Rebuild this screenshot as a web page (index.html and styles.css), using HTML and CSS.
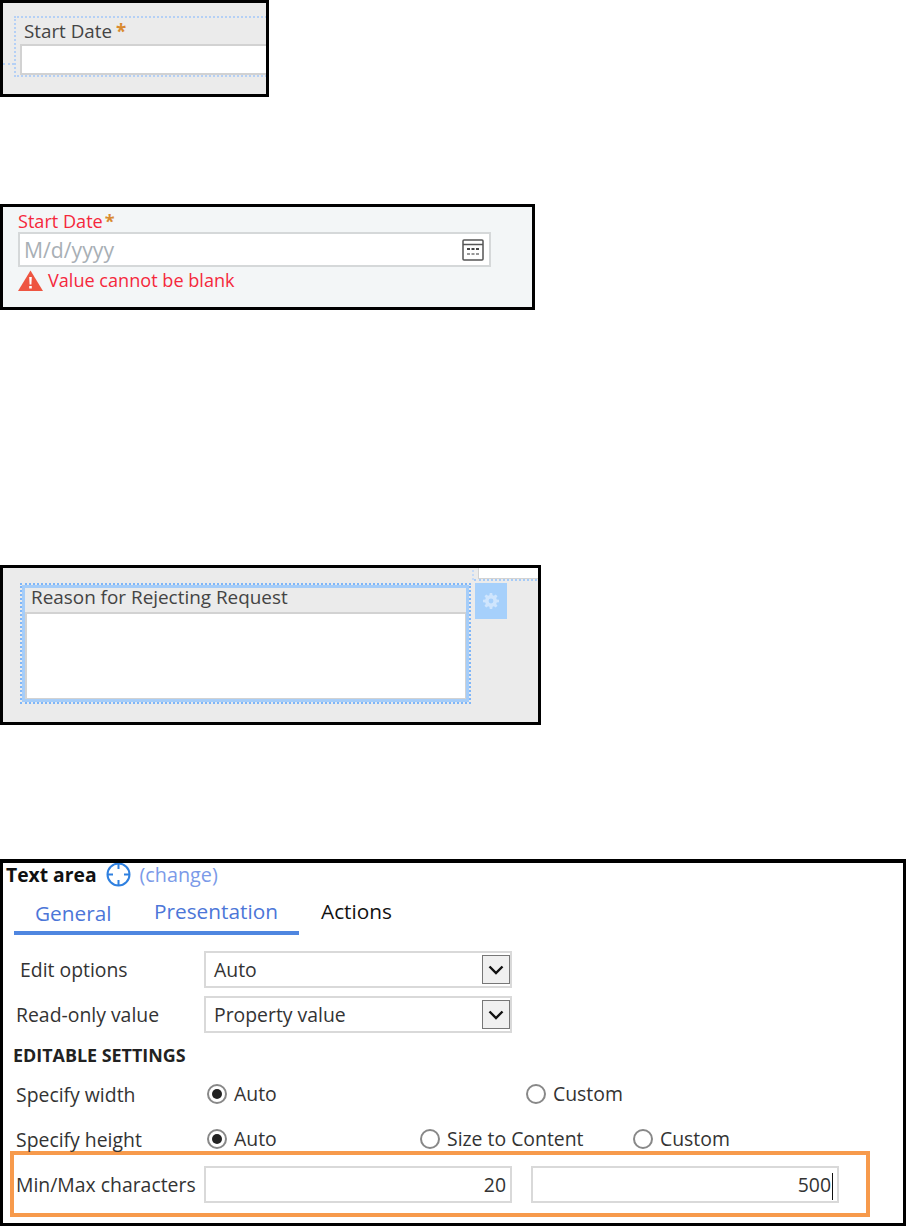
FILE: index.html
```html
<!DOCTYPE html>
<html lang="en">
<head>
    <meta charset="UTF-8">
    <title>Text area validation</title>
    <link rel="stylesheet" href="styles.css">
</head>
<body>
    <!-- Required field in the designer -->
    <div class="shot shot-designer">
        <div class="guide-stub"></div>
        <div class="cell-outline">
            <div class="field-label">Start Date<span class="star">*</span></div>
            <div class="plain-input"></div>
        </div>
    </div>

    <!-- Required field at run time -->
    <div class="shot shot-error">
        <div class="field-label error-text">Start Date<span class="star">*</span></div>
        <div class="date-input">
            <span class="placeholder">M/d/yyyy</span>
            <svg class="calendar" width="22" height="22" viewBox="0 0 22 22">
                <rect x="1" y="1" width="20" height="20" rx="1" fill="#fff" stroke="#555" stroke-width="1.5"/>
                <path d="M1 5.5h20" stroke="#555" stroke-width="1.5"/>
                <path d="M5 10h3M9.5 10h3M14 10h3" stroke="#444" stroke-width="2"/>
                <path d="M5 15h3M9.5 15h3M14 15h3" stroke="#777" stroke-width="1.5"/>
            </svg>
        </div>
        <div class="error-row">
            <svg width="25" height="21" viewBox="0 0 25 21">
                <path d="M12.5 0.5L25 21H0Z" fill="#ee5541"/>
                <path d="M11.2 7h2.6l-.4 7.5h-1.8zM11.2 16h2.6v2.6h-2.6z" fill="#fff"/>
            </svg>
            <span class="error-text">Value cannot be blank</span>
        </div>
    </div>

    <!-- Selected text area cell -->
    <div class="shot shot-selected">
        <div class="top-guides">
            <div class="guide-left"></div>
            <div class="guide-right"><div class="white-tab"></div></div>
        </div>
        <div class="selected-row">
            <div class="selected-cell">
                <div class="field-label">Reason for Rejecting Request</div>
                <div class="plain-area"></div>
            </div>
            <div class="gear-tile">
                <svg width="16" height="16" viewBox="0 0 16 16">
                    <path d="M6.800 0h2.400l.4 2.300 1.300.5 1.900-1.300 1.700 1.700-1.300 1.900.5 1.300 2.300.4v2.400l-2.300.4-.5 1.300 1.300 1.900-1.700 1.700-1.900-1.300-1.300.5-.4 2.300H6.800l-.4-2.300-1.300-.5-1.900 1.300-1.700-1.700 1.300-1.900-.5-1.300L0 9.200V6.800l2.300-.4.5-1.300L1.500 3.200l1.700-1.700 1.900 1.300 1.300-.5z" fill="#cfe5fd"/>
                    <circle cx="8" cy="8" r="2.400" fill="#a6d0fb"/>
                </svg>
            </div>
        </div>
    </div>

    <!-- Properties panel -->
    <div class="shot shot-panel">
        <div class="panel-title">
            <b>Text area</b>
            <svg width="25" height="25" viewBox="0 0 25 25" fill="none" stroke="#2f80e0" stroke-width="2">
                <circle cx="12.500" cy="12.500" r="11"/>
                <path d="M12.500 1v6M12.500 18v6M1 12.500h6M18 12.500h6"/>
            </svg>
            <span class="link">(change)</span>
        </div>
        <div class="tabs">
            <span class="tab tab-general">General</span>
            <span class="tab tab-presentation">Presentation</span>
            <span class="tab tab-actions">Actions</span>
        </div>

        <div class="select-rows">
            <div class="form-row">
                <label class="indent">Edit options</label>
                <div class="box select-box">Auto
                    <span class="select-btn"><svg width="16" height="10" viewBox="0 0 16 10"><path d="M1.500 1.500L8 8l6.500-6.500" fill="none" stroke="#111" stroke-width="2.400"/></svg></span>
                </div>
            </div>
            <div class="form-row">
                <label>Read-only value</label>
                <div class="box select-box">Property value
                    <span class="select-btn"><svg width="16" height="10" viewBox="0 0 16 10"><path d="M1.500 1.500L8 8l6.500-6.500" fill="none" stroke="#111" stroke-width="2.400"/></svg></span>
                </div>
            </div>
        </div>

        <div class="section-title">EDITABLE SETTINGS</div>

        <div class="form-row row-radio">
            <label>Specify width</label>
            <span class="radio checked slot-a">Auto</span>
            <span class="radio">Custom</span>
        </div>
        <div class="form-row row-radio row-height">
            <label>Specify height</label>
            <span class="radio checked slot-a">Auto</span>
            <span class="radio slot-size">Size to Content</span>
            <span class="radio">Custom</span>
        </div>

        <div class="highlight">
            <label>Min/Max characters</label>
            <div class="box num-box">20</div>
            <div class="box num-box num-second">500<span class="caret"></span></div>
        </div>
    </div>
</body>
</html>
```

FILE: styles.css
```css
body {
    margin: 0;
    background: #fff;
    font-family: "Open Sans", sans-serif;
    font-size: 19.4px;
    color: #333;
}
.shot {
    box-sizing: border-box;
    border: 3px solid #000;
    overflow: hidden;
}
.field-label {
    font-size: 18.1px;
    line-height: 22px;
    color: #444;
}
.star {
    color: #d98a2f;
    margin-left: 2px;
    font-weight: 700;
}
.error-text {
    color: #f5283c;
}

/* figure 1 */
.shot-designer {
    position: relative;
    width: 269px;
    height: 97px;
    background: #ebebeb;
    padding: 13px 0 0 11px;
}
.cell-outline {
    width: 300px;
    height: 61px;
    box-sizing: border-box;
    border: 2px dotted #b5d0f5;
    padding: 2px 0 0 4px;
}
.cell-outline .field-label {
    margin-left: 4px;
    margin-bottom: 2px;
    font-size: 18.8px;
}
.cell-outline .star {
    margin-left: 4px;
}
.plain-input {
    height: 31px;
    background: #fff;
    border: 2px solid #d2d2d2;
    box-sizing: border-box;
}
.guide-stub {
    position: absolute;
    left: 0;
    top: 60px;
    width: 11px;
    border-top: 2px dotted #b5d0f5;
}

/* figure 2 */
.shot-error {
    width: 535px;
    height: 106px;
    margin-top: 107px;
    background: #f3f6f7;
    padding: 3px 0 0 15px;
}
.date-input {
    display: flex;
    align-items: center;
    justify-content: space-between;
    box-sizing: border-box;
    width: 473px;
    height: 35px;
    padding: 0 5px 0 4px;
    background: #fff;
    border: 2px solid #d5d8d9;
}
.placeholder {
    font-size: 21.2px;
    color: #a8afb5;
}
.error-row {
    display: flex;
    align-items: center;
    gap: 5px;
    margin-top: 1px;
    font-size: 18.1px;
}

/* figure 3 */
.shot-selected {
    width: 541px;
    height: 160px;
    margin-top: 255px;
    background: #ebebeb;
    padding: 0 0 0 17px;
}
.top-guides {
    display: flex;
    height: 15px;
}
.guide-left {
    width: 452px;
    height: 12px;
    margin-top: -2px;
    border-top: 2px dotted #c5daf7;
    border-right: 2px dotted #c5daf7;
}
.guide-right {
    flex: 1;
    height: 11px;
    margin-right: -3px;
    border-bottom: 2px dotted #a6cbf7;
}
.white-tab {
    box-sizing: border-box;
    height: 11px;
    margin-left: 4px;
    background: #fff;
    border: 1px solid #d2d2d2;
    border-top: none;
}
.selected-row {
    display: flex;
    gap: 4px;
}
.selected-cell {
    box-sizing: border-box;
    width: 451px;
    height: 121px;
    padding: 0 2px 2px 3px;
    border: 2px dotted #7fb6f8;
    outline: 3px solid #a6cdf8;
    outline-offset: -5px;
}
.selected-cell .field-label {
    font-size: 18.9px;
    line-height: 25px;
    margin: 0 0 2px 6px;
}
.plain-area {
    height: 88px;
    box-sizing: border-box;
    background: #fff;
    border: 2px solid #d2d2d2;
}
.gear-tile {
    display: flex;
    align-items: center;
    justify-content: center;
    width: 32px;
    height: 36px;
    background: #a6d0fb;
}

/* figure 4 */
.shot-panel {
    width: 906px;
    height: 367px;
    margin-top: 134px;
    border-width: 4px 3px 3px;
    background: #fff;
}
.panel-title {
    display: flex;
    align-items: center;
    height: 22px;
    padding-left: 3px;
    font-size: 19.3px;
    color: #111;
}
.panel-title svg {
    margin-left: 9px;
}
.link {
    margin-left: 9px;
    font-size: 19.8px;
    color: #7b9ae8;
}
.tabs {
    position: relative;
    width: 285px;
    height: 46px;
    margin-left: 11px;
    border-bottom: 4px solid #4f86e0;
    font-size: 20.8px;
    line-height: 46px;
}
.tab {
    position: absolute;
    top: 3px;
    color: #111;
}
.tab-general {
    left: 21px;
    top: 5px;
    color: #4c76d8;
}
.tab-presentation {
    left: 140px;
    color: #4c76d8;
}
.tab-actions {
    left: 307px;
}
.form-row {
    display: flex;
    align-items: center;
    padding-left: 13px;
}
.form-row label {
    width: 188px;
    flex: none;
}
.form-row .indent {
    box-sizing: border-box;
    padding-left: 4px;
}
.select-rows {
    display: flex;
    flex-direction: column;
    gap: 8px;
    margin-top: 16px;
}
.box {
    box-sizing: border-box;
    width: 308px;
    height: 37px;
    line-height: 33px;
    background: #fff;
    border: 2px solid #d9d9d9;
    padding: 0 8px;
    color: #333;
}
.select-box {
    position: relative;
}
.select-btn {
    position: absolute;
    right: 0;
    top: 2px;
    display: flex;
    align-items: center;
    justify-content: center;
    box-sizing: border-box;
    width: 28px;
    height: 29px;
    background: #f0f0f0;
    border: 1px solid #777;
}
.section-title {
    margin: 10px 0 0 10px;
    height: 24px;
    font-size: 17.9px;
    line-height: 24px;
    font-weight: 700;
    color: #222;
}
.row-radio {
    margin-top: 15px;
    height: 24px;
}
.row-height {
    margin-top: 21px;
}
.row-radio label {
    width: 191px;
}
.radio {
    position: relative;
    padding-left: 27px;
    line-height: 24px;
}
.radio::before {
    content: "";
    position: absolute;
    left: 0;
    top: 2px;
    box-sizing: border-box;
    width: 20px;
    height: 20px;
    border-radius: 50%;
    border: 2px solid #888;
    background: #fff;
}
.radio.checked::after {
    content: "";
    position: absolute;
    left: 5px;
    top: 7px;
    width: 10px;
    height: 10px;
    border-radius: 50%;
    background: #222;
}
.slot-a {
    box-sizing: border-box;
    width: 213px;
}
.row-radio:not(.row-height) .slot-a {
    width: 319px;
}
.slot-size {
    box-sizing: border-box;
    width: 213px;
}
.highlight {
    display: flex;
    align-items: center;
    box-sizing: border-box;
    width: 860px;
    height: 66px;
    margin: 0 0 0 7px;
    padding-left: 2px;
    border: 4px solid #f79a4c;
}
.highlight label {
    width: 188px;
    flex: none;
}
.num-box {
    padding-right: 4px;
    text-align: right;
}
.num-second {
    margin-left: 19px;
}
.caret {
    display: inline-block;
    width: 1px;
    height: 27px;
    margin-left: 1px;
    vertical-align: middle;
    background: #111;
}
```
